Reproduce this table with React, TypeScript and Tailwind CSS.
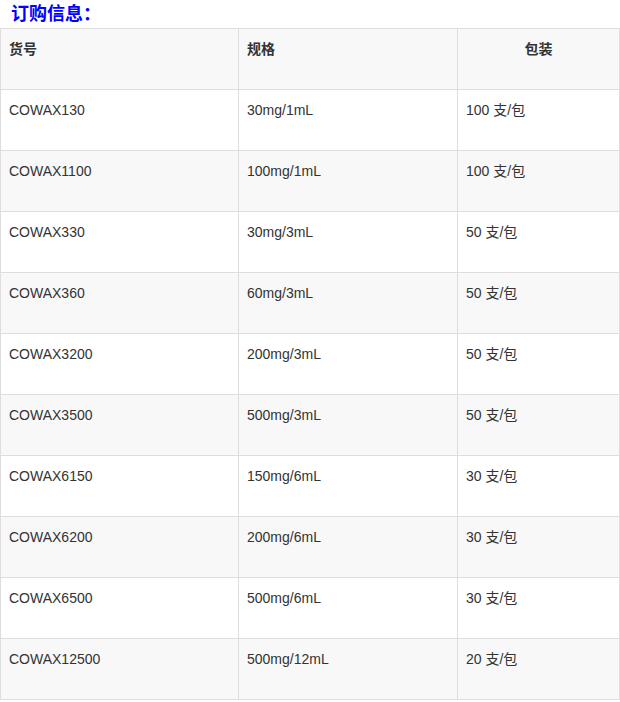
import React from "react";

const rows = [
  ["COWAX130", "30mg/1mL", "100 支/包"],
  ["COWAX1100", "100mg/1mL", "100 支/包"],
  ["COWAX330", "30mg/3mL", "50 支/包"],
  ["COWAX360", "60mg/3mL", "50 支/包"],
  ["COWAX3200", "200mg/3mL", "50 支/包"],
  ["COWAX3500", "500mg/3mL", "50 支/包"],
  ["COWAX6150", "150mg/6mL", "30 支/包"],
  ["COWAX6200", "200mg/6mL", "30 支/包"],
  ["COWAX6500", "500mg/6mL", "30 支/包"],
  ["COWAX12500", "500mg/12mL", "20 支/包"],
];

const font = {
  fontFamily: '"Liberation Sans", Arial, "Noto Sans CJK SC", sans-serif',
};

export default function App() {
  return (
    <div className="bg-white w-[620px] h-[702px] text-[#333]" style={font}>
      {/* heading */}
      <h2 className="pl-[11px] h-[28px] leading-[29px] text-[18px] font-bold text-[#0000ff]">
        订购信息：
      </h2>

      <table className="table-fixed border-collapse w-[619px] text-[14px] leading-[20px]">
        <colgroup>
          <col className="w-[238px]" />
          <col className="w-[219px]" />
          <col className="w-[162px]" />
        </colgroup>
        <thead>
          <tr className="bg-[#f8f8f8] h-[61px]">
            <th className="border border-[#dddddd] align-top text-left font-bold px-[8px] pt-[10px]">货号</th>
            <th className="border border-[#dddddd] align-top text-left font-bold px-[8px] pt-[10px]">规格</th>
            <th className="border border-[#dddddd] align-top text-center font-bold px-[8px] pt-[10px]">包装</th>
          </tr>
        </thead>
        <tbody>
          {rows.map((r, i) => (
            <tr key={r[0]} className={i % 2 === 1 ? "bg-[#f8f8f8] h-[61px]" : "bg-white h-[61px]"}>
              {r.map((c, j) => (
                <td key={j} className="border border-[#dddddd] align-top px-[8px] pt-[10px]">
                  {c}
                </td>
              ))}
            </tr>
          ))}
        </tbody>
      </table>
    </div>
  );
}
